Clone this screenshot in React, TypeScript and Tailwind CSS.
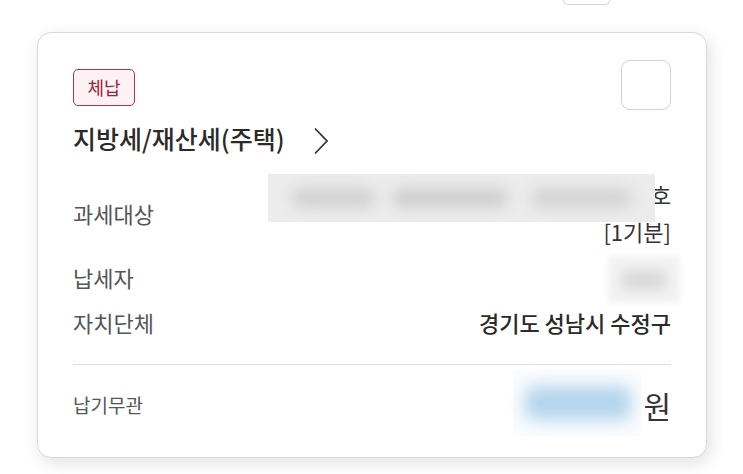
const font = { fontFamily: '"Noto Sans CJK KR", "Noto Sans", sans-serif' };

function Blur({ className }: { className: string }) {
  return (
    <div className={`pointer-events-none absolute overflow-hidden ${className}`}>
      <div className="absolute inset-0 blur-[7px]">
        <div className="absolute left-[6%] top-[30%] h-[40%] w-[22%] rounded-full bg-[#d2d2d2]" />
        <div className="absolute left-[32%] top-[30%] h-[40%] w-[30%] rounded-full bg-[#cfcfcf]" />
        <div className="absolute left-[68%] top-[30%] h-[40%] w-[26%] rounded-full bg-[#d4d4d4]" />
      </div>
    </div>
  );
}

export default function App() {
  return (
    <div className="h-[474px] w-[743px] overflow-hidden bg-white" style={font}>
      {/* bottom of the previous item's checkbox */}
      <div className="ml-[563px] h-[5px] w-[47px] rounded-b-md border-x border-b border-[#d4d4d4]" />

      <div className="ml-[37px] mt-[27px] w-[670px] rounded-[14px] border border-[#d9d9d9] bg-white px-[35px] pb-[32px] pt-[27px] shadow-[3px_5px_16px_rgba(60,40,40,0.14)]">
        {/* header */}
        <div className="flex items-start justify-between">
          <div className="mt-[9px] flex h-[37px] w-[62px] items-center justify-center rounded-[5px] border border-[#a23a55] bg-[#fdf1f3] text-[18px] text-[#9e1f3d]">
            체납
          </div>
          <div className="h-[50px] w-[50px] rounded-[9px] border border-[#d2d2d2]" />
        </div>

        <div className="mt-[12px] flex h-[32px] items-center text-[25px] font-medium leading-[32px] text-[#2a2a2a]">
          지방세/재산세(주택)
          <svg className="ml-[28px] mt-[6px]" width="16" height="28" viewBox="0 0 16 28" fill="none">
            <polyline points="2,1.5 14,14 2,26.5" stroke="#333" strokeWidth="1.8" />
          </svg>
        </div>

        {/* rows */}
        <div className="relative mt-[22px] flex items-center justify-between">
          <span className="text-[22px] text-[#555]">과세대상</span>
          <div className="flex flex-col items-end text-[22px] leading-[37px] text-[#333]">
            <span>호</span>
            <span>[1기분]</span>
          </div>
          <div className="absolute left-[195px] top-[-2px] h-[48px] w-[387px] bg-[#ececec]">
            <Blur className="inset-0" />
          </div>
        </div>

        <div className="relative mt-[9px] flex h-[36px] items-center justify-between">
          <span className="text-[22px] text-[#555]">납세자</span>
          <div className="absolute left-[535px] top-[-3px] h-[47px] w-[72px] bg-[#f2f2f2] blur-[3px]">
            <div className="mx-auto mt-[14px] h-[20px] w-[48px] rounded-full bg-[#d9d9d9] blur-[5px]" />
          </div>
        </div>

        <div className="mt-[9px] flex h-[36px] items-center justify-between">
          <span className="text-[22px] text-[#555]">자치단체</span>
          <span className="text-[22px] font-medium text-[#2a2a2a]">경기도 성남시 수정구</span>
        </div>

        <div className="mt-[24px] h-px bg-[#dedede]" />

        <div className="relative mt-[20px] flex h-[40px] items-center justify-between">
          <span className="text-[19px] text-[#555]">납기무관</span>
          <span className="text-[30px] leading-[40px] text-[#333]">원</span>
          <div className="absolute left-[440px] top-[-15px] h-[66px] w-[128px] bg-[#fafcfe]">
            <div className="absolute left-[12px] top-[16px] h-[34px] w-[106px] rounded-lg bg-[#b4d5ed] blur-[8px]" />
          </div>
        </div>
      </div>
    </div>
  );
}
